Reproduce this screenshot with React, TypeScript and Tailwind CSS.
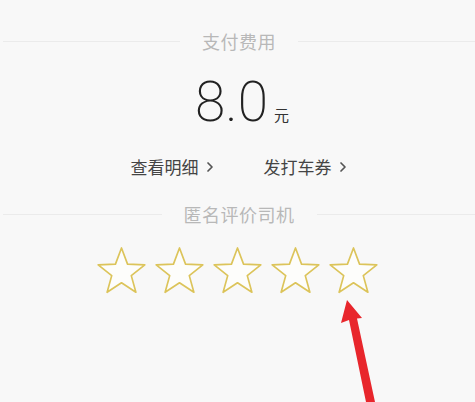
import React from "react";

const cjk = { fontFamily: '"Noto Sans CJK SC", "Noto Sans", sans-serif' };

function Star() {
    return (
        <svg width="51" height="47" viewBox="0 0 52 48" fill="none">
            <polygon
                points="26,1 32.17,17.51 49.78,18.27 35.99,29.24 40.69,46.23 26,36.5 11.31,46.23 16.01,29.24 2.22,18.27 19.83,17.51"
                stroke="#dcc45a"
                strokeWidth="1.7"
                strokeLinejoin="round"
                fill="#fdfdfb"
            />
        </svg>
    );
}

function Chevron() {
    return (
        <svg width="8" height="12" viewBox="0 0 8 12" className="ml-[7px]" fill="none">
            <path d="M2 2 L6 6 L2 10" stroke="#555" strokeWidth="1.7" strokeLinecap="round" strokeLinejoin="round" />
        </svg>
    );
}

function Divider({ label }: { label: string }) {
    return (
        <div className="flex items-center">
            <div className="flex-1 h-px bg-[#ebebeb] ml-[3px]" />
            <span className="px-[22px] text-[18px] leading-[24px] tracking-[0.5px] text-[#b8b8b8]">{label}</span>
            <div className="flex-1 h-px bg-[#ebebeb]" />
        </div>
    );
}

export default function App() {
    return (
        <div className="relative w-[475px] h-[402px] overflow-hidden bg-[#f8f8f8]" style={cjk}>
            <div className="pt-[29px]">
                <Divider label="支付费用" />
            </div>

            {/* amount */}
            <div className="mt-[22px] flex items-baseline justify-center pl-[9px]">
                <span
                    className="text-[55px] leading-[55px] font-extralight text-[#222]"
                    style={{ fontFamily: 'Roboto, "Noto Sans", sans-serif' }}
                >
                    8.0
                </span>
                <span className="ml-[6px] text-[15px] text-[#333]">元</span>
            </div>

            {/* links */}
            <div className="mt-[25px] flex justify-center gap-[50px] text-[17px] leading-[24px] text-[#444] pl-[2px]">
                <span className="flex items-center">查看明细<Chevron /></span>
                <span className="flex items-center">发打车券<Chevron /></span>
            </div>

            <div className="mt-[23px]">
                <Divider label="匿名评价司机" />
            </div>

            {/* stars */}
            <div className="mt-[21px] flex justify-center gap-[7px]">
                <Star />
                <Star />
                <Star />
                <Star />
                <Star />
            </div>

            {/* red annotation arrow */}
            <svg className="absolute left-0 top-0" width="475" height="402" viewBox="0 0 475 402">
                <polygon points="347,300 362,318 357,318.5 375,402 366,402 349,320 341,323" fill="#e8262c" />
            </svg>
        </div>
    );
}
